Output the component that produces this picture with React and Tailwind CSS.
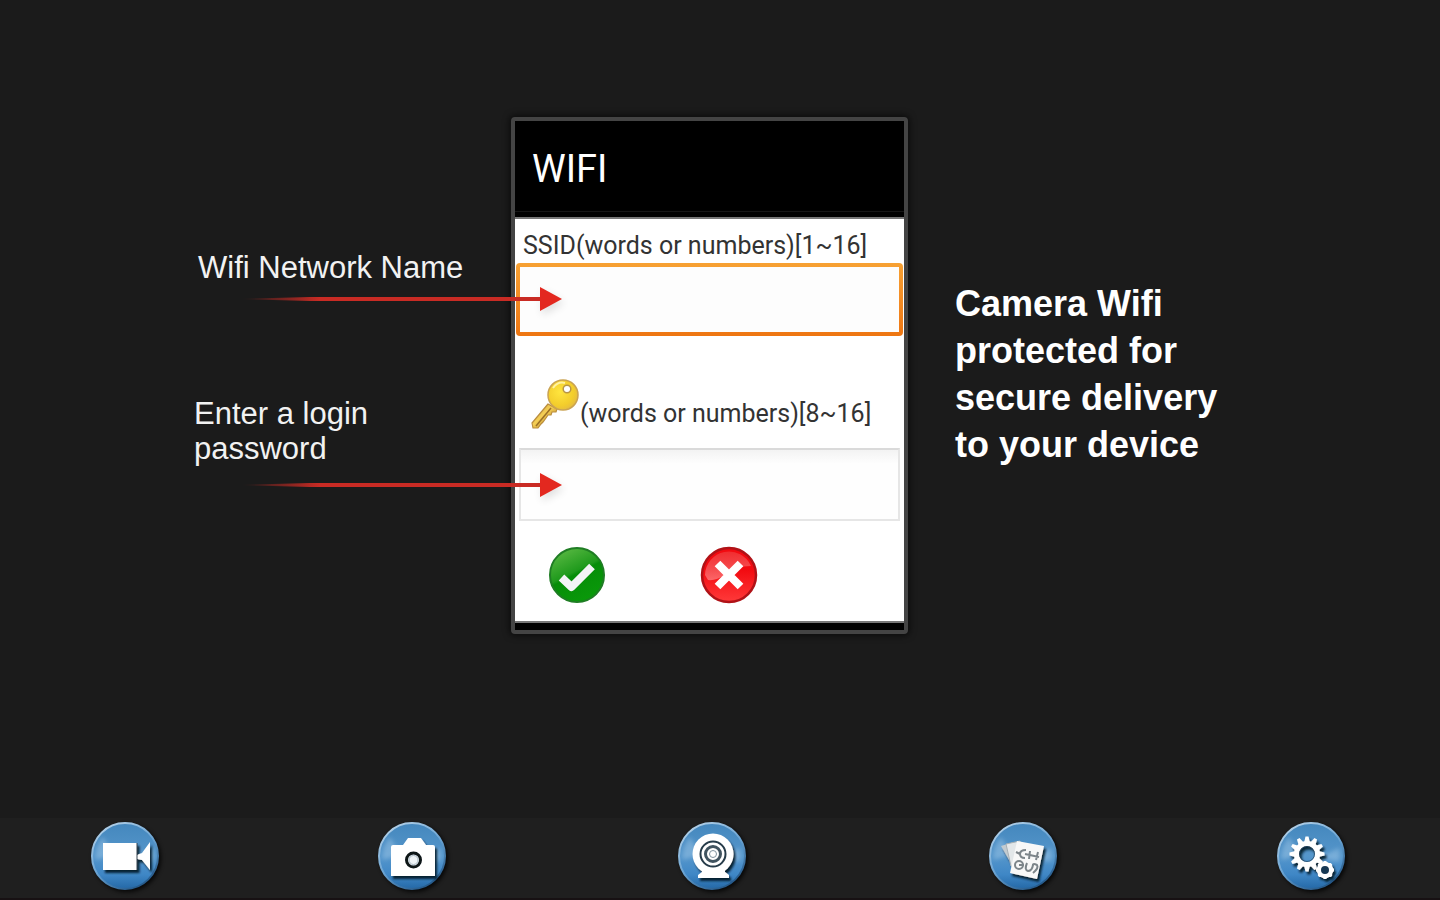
import { useState } from "react";

const toothAngles = [0, 30, 60, 90, 120, 150, 180, 210, 240, 270, 300, 330];
const smallToothAngles = [0, 45, 90, 135, 180, 225, 270, 315];

function Ball({ id, children }) {
  return (
    <svg viewBox="0 0 68 68" className="size-full overflow-visible">
      <defs>
        <linearGradient id={`${id}-fill`} x1="0" y1="0" x2="0" y2="1">
          <stop offset="0" stopColor="#4487bd" />
          <stop offset="0.5" stopColor="#5596cb" />
          <stop offset="0.78" stopColor="#3f87c6" />
          <stop offset="1" stopColor="#2468a6" />
        </linearGradient>
        <linearGradient id={`${id}-rim`} x1="0.2" y1="0" x2="0.8" y2="1">
          <stop offset="0" stopColor="#b5d2e9" />
          <stop offset="0.5" stopColor="#6aa3d2" />
          <stop offset="1" stopColor="#1b4f80" />
        </linearGradient>
        <filter id={`${id}-blur`} x="-40%" y="-40%" width="180%" height="180%">
          <feGaussianBlur stdDeviation="2" />
        </filter>
        <filter id={`${id}-drop`} x="-30%" y="-30%" width="160%" height="160%">
          <feDropShadow dx="2" dy="3" stdDeviation="0.8" floodColor="#061522" floodOpacity="0.9" />
        </filter>
      </defs>
      <circle cx="36" cy="36" r="34" fill="#000" opacity="0.8" filter={`url(#${id}-blur)`} />
      <circle cx="34" cy="34" r="33" fill={`url(#${id}-fill)`} stroke={`url(#${id}-rim)`} strokeWidth="2" />
      <path d="M5 38A29 29 0 0 1 12 15L22 32Z" fill="#b9d9f2" opacity="0.35" filter={`url(#${id}-blur)`} />
      <path d="M62 26A29 29 0 0 1 62 40L42 36Z" fill="#b9d9f2" opacity="0.35" filter={`url(#${id}-blur)`} />
      <g filter={`url(#${id}-drop)`}>{children}</g>
    </svg>
  );
}

function VideoIcon() {
  return (
    <Ball id="video">
      <rect x="12" y="21" width="34" height="27" fill="#fff" />
      <path d="M46 33L51 31L59 20V48L51 38L46 37Z" fill="#fff" />
      <path d="M46 21V48" stroke="#35434f" strokeWidth="1" />
    </Ball>
  );
}

function CameraIcon() {
  return (
    <Ball id="camera">
      <path d="M13 25Q13 23 15 23H25L30 16H43L48 23H55Q57 23 57 25V54H13Z" fill="#fff" />
      <circle cx="35.5" cy="38" r="7" fill="#eef3f6" stroke="#0c1419" strokeWidth="3" />
      <circle cx="35.5" cy="38" r="4.5" fill="none" stroke="#a9b9c4" strokeWidth="1" />
    </Ball>
  );
}

function WebcamIcon() {
  return (
    <Ball id="webcam">
      <path d="M24 45H47L47 50L51 53V56H20V53L24 50Z" fill="#fff" />
      <circle cx="35" cy="32" r="20.5" fill="#fff" />
      <circle cx="35" cy="32" r="12.5" fill="none" stroke="#263b49" strokeWidth="2" />
      <circle cx="35" cy="32" r="7.5" fill="none" stroke="#40535f" strokeWidth="3" />
      <circle cx="35" cy="32" r="3.5" fill="#fff" stroke="#7f929e" strokeWidth="1" />
    </Ball>
  );
}

function GalleryIcon() {
  return (
    <Ball id="gallery">
      <path d="M12 24L25 20L30 36L20 38Z" fill="#c3cbd0" />
      <path d="M17 22L31 19L34 46L22 44Z" fill="#e3e7e9" stroke="#a7b0b5" strokeWidth="1" />
      <path d="M28 19L55 24L48 57L21 51Z" fill="#f8f8f8" />
      <g fill="none" stroke="#7d858a" strokeWidth="2">
        <path d="M27 30L31 32M37 28Q31 28 31 32Q31 36 36 36M41 29L40 37M49 30L47 38M36 32L50 35" />
        <circle cx="30" cy="43" r="4" />
        <path d="M30 43H35M38 41Q35 48 39 49Q43 49 44 43Q44 41 48 43Q50 46 44 51" />
      </g>
    </Ball>
  );
}

function SettingsIcon() {
  return (
    <Ball id="settings">
      {toothAngles.map((a) => (
        <path key={a} d="M27 21L28.5 14.5H31.5L33 21Z" fill="#fff" transform={`rotate(${a} 30 32)`} />
      ))}
      <circle cx="30" cy="32" r="10.5" fill="none" stroke="#fff" strokeWidth="5" />
      <circle cx="30" cy="32" r="7.5" fill="none" stroke="#23445f" strokeWidth="1" opacity="0.7" />
      {smallToothAngles.map((a) => (
        <path key={a} d="M45 41L47 39H49L51 41Z" fill="#fff" transform={`rotate(${a} 48 48)`} />
      ))}
      <circle cx="48" cy="48" r="6" fill="#173753" stroke="#fff" strokeWidth="4" />
    </Ball>
  );
}

function KeyIcon() {
  return (
    <svg viewBox="0 0 50 52" className="w-[50px] h-[52px]" aria-hidden="true">
      <defs>
        <radialGradient id="key-head" cx="0.4" cy="0.4" r="0.7">
          <stop offset="0" stopColor="#ffe53e" />
          <stop offset="0.65" stopColor="#f3cd2c" />
          <stop offset="1" stopColor="#dfb648" />
        </radialGradient>
        <linearGradient id="key-shaft" x1="0" y1="0" x2="1" y2="1">
          <stop offset="0" stopColor="#c59a3c" />
          <stop offset="0.45" stopColor="#f5cf55" />
          <stop offset="1" stopColor="#a9741e" />
        </linearGradient>
      </defs>
      <path
        d="M18 26L2 45L3 50L8 50L11 46L13 44L16 40L18 37L21 37L22 34L26 34L27 31Z"
        fill="url(#key-shaft)"
        stroke="#ba8d3e"
        strokeWidth="1.2"
      />
      <path d="M21 30L6 48" stroke="#9b6f26" strokeWidth="1.5" />
      <circle cx="33" cy="17" r="15" fill="url(#key-head)" stroke="#caa352" strokeWidth="1.5" />
      <path d="M23 10Q28 3 35 5" stroke="#fff2a3" strokeWidth="2" fill="none" />
      <circle cx="37" cy="11" r="3.8" fill="#fff" stroke="#b89545" strokeWidth="1.5" />
    </svg>
  );
}

function AcceptIcon() {
  return (
    <svg viewBox="0 0 58 58" className="size-full">
      <defs>
        <linearGradient id="ok-fill" x1="0.2" y1="0" x2="0.7" y2="1">
          <stop offset="0" stopColor="#5cba45" />
          <stop offset="0.45" stopColor="#1f9a1c" />
          <stop offset="0.5" stopColor="#068d08" />
          <stop offset="1" stopColor="#0a9a0a" />
        </linearGradient>
      </defs>
      <circle cx="29" cy="29" r="27" fill="url(#ok-fill)" stroke="#1f7d24" strokeWidth="2" />
      <path d="M13.5 31.5L23.5 41L44 20.5" fill="none" stroke="#f4f4f6" strokeWidth="8" strokeLinejoin="round" />
    </svg>
  );
}

function CancelIcon() {
  return (
    <svg viewBox="0 0 58 58" className="size-full">
      <defs>
        <linearGradient id="no-shine" x1="0" y1="0" x2="0" y2="1">
          <stop offset="0" stopColor="#f04a4a" />
          <stop offset="1" stopColor="#ffa5a5" />
        </linearGradient>
        <linearGradient id="no-fill" x1="0" y1="0" x2="0" y2="1">
          <stop offset="0.4" stopColor="#f20a10" />
          <stop offset="1" stopColor="#ff3a3a" />
        </linearGradient>
      </defs>
      <circle cx="29" cy="29" r="27" fill="url(#no-fill)" stroke="#b01217" strokeWidth="2.5" />
      <path d="M5 29A24 24 0 0 1 51 20Q35 20 25 29Q16 35 8 34Z" fill="url(#no-shine)" opacity="0.55" />
      <path d="M17.5 17.5L40.5 40.5M40.5 17.5L17.5 40.5" stroke="#fff" strokeWidth="8" />
    </svg>
  );
}

function Arrow({ id }) {
  return (
    <svg viewBox="0 0 322 26" className="block ml-[46px] w-[322px] h-[26px] overflow-visible" aria-hidden="true">
      <defs>
        <linearGradient id={id} gradientUnits="userSpaceOnUse" x1="0" y1="0" x2="80" y2="0">
          <stop offset="0" stopColor="#c92b24" stopOpacity="0" />
          <stop offset="1" stopColor="#c92b24" />
        </linearGradient>
        <filter id={`${id}-glow`} x="-50%" y="-50%" width="220%" height="220%">
          <feGaussianBlur stdDeviation="4" />
        </filter>
      </defs>
      <path d="M302 5L324 17L302 29Z" fill="#000" opacity="0.12" filter={`url(#${id}-glow)`} />
      <path d="M0 13L70 11H301V15H70Z" fill={`url(#${id})`} />
      <path d="M300 1L322 13L300 25Z" fill="#e3281f" />
    </svg>
  );
}

const tools = [
  { label: "Video", Icon: VideoIcon },
  { label: "Photo", Icon: CameraIcon },
  { label: "Webcam", Icon: WebcamIcon },
  { label: "Gallery", Icon: GalleryIcon },
  { label: "Settings", Icon: SettingsIcon },
];

export default function App() {
  const [ssid, setSsid] = useState("");
  const [password, setPassword] = useState("");

  return (
    <div className="min-h-screen flex flex-col bg-[#1b1b1b] font-['Liberation_Sans',Arial,sans-serif] text-white">
      <main className="flex-1 grid grid-cols-[1fr_397px_1fr] items-start pt-[117px] pr-[21px]">
        <div className="relative z-10 justify-self-end w-[317px] pt-[133px] text-[31px] leading-[35px] text-[#f2f2f2] pointer-events-none">
          <p className="pl-1 mb-px">Wifi Network Name</p>
          <Arrow id="arrow-name" />
          <p className="mt-[84px] mb-[6px]">
            Enter a login
            <br />
            password
          </p>
          <Arrow id="arrow-password" />
        </div>

        <form
          onSubmit={(e) => e.preventDefault()}
          className="border-4 border-[#444] rounded-sm bg-black shadow-[0_0_6px_2px_rgba(0,0,0,0.55)] font-[Roboto,sans-serif]"
        >
          <div className="h-[91px] px-[17px] pt-[6px] flex items-center border-b border-[#151515]">
            <h1 className="text-[38px] leading-[44px]">WIFI</h1>
          </div>
          <div className="mt-[5px] mb-[7px] bg-white border-y-2 border-[#777] pb-[17px] text-[25px] text-[#333]">
            <label htmlFor="ssid" className="block h-11 px-2 pt-[9px] leading-9">
              SSID(words or numbers)[1~16]
            </label>
            <div className="h-[73px] mx-px p-1 rounded-sm bg-linear-to-b from-[#f7a133] to-[#ee7611]">
              <input
                id="ssid"
                type="text"
                maxLength={16}
                value={ssid}
                onChange={(e) => setSsid(e.target.value)}
                className="block size-full px-3 bg-[#fdfdfd] outline-none"
              />
            </div>
            <label htmlFor="password" className="flex items-end mt-[42px] pl-[15px] leading-8">
              <KeyIcon />
              (words or numbers)[8~16]
            </label>
            <div className="mt-[18px] h-[73px] mx-1">
              <input
                id="password"
                type="password"
                maxLength={16}
                value={password}
                onChange={(e) => setPassword(e.target.value)}
                className="block size-full px-3 border-2 border-[#e6e6e6] border-t-[#dadada] bg-linear-to-b from-[#f3f3f3] to-[#fefefe] to-20% outline-none"
              />
            </div>
            <div className="flex gap-[94px] mt-[25px] pl-[33px]">
              <button type="submit" aria-label="Accept" className="size-[58px] cursor-pointer">
                <AcceptIcon />
              </button>
              <button type="button" aria-label="Cancel" className="size-[58px] cursor-pointer">
                <CancelIcon />
              </button>
            </div>
          </div>
        </form>

        <p className="pl-[47px] pt-[163px] text-4xl leading-[47px] font-bold">
          Camera Wifi
          <br />
          protected for
          <br />
          secure delivery
          <br />
          to your device
        </p>
      </main>

      <nav className="h-[82px] grid grid-cols-[287fr_300fr_311fr_288fr_68px] items-center pl-[91px] pr-[95px] pb-1 bg-[#1f1f1f] border-b-2 border-[#171113]">
        {tools.map(({ label, Icon }) => (
          <button key={label} type="button" aria-label={label} className="size-[68px] cursor-pointer">
            <Icon />
          </button>
        ))}
      </nav>
    </div>
  );
}
